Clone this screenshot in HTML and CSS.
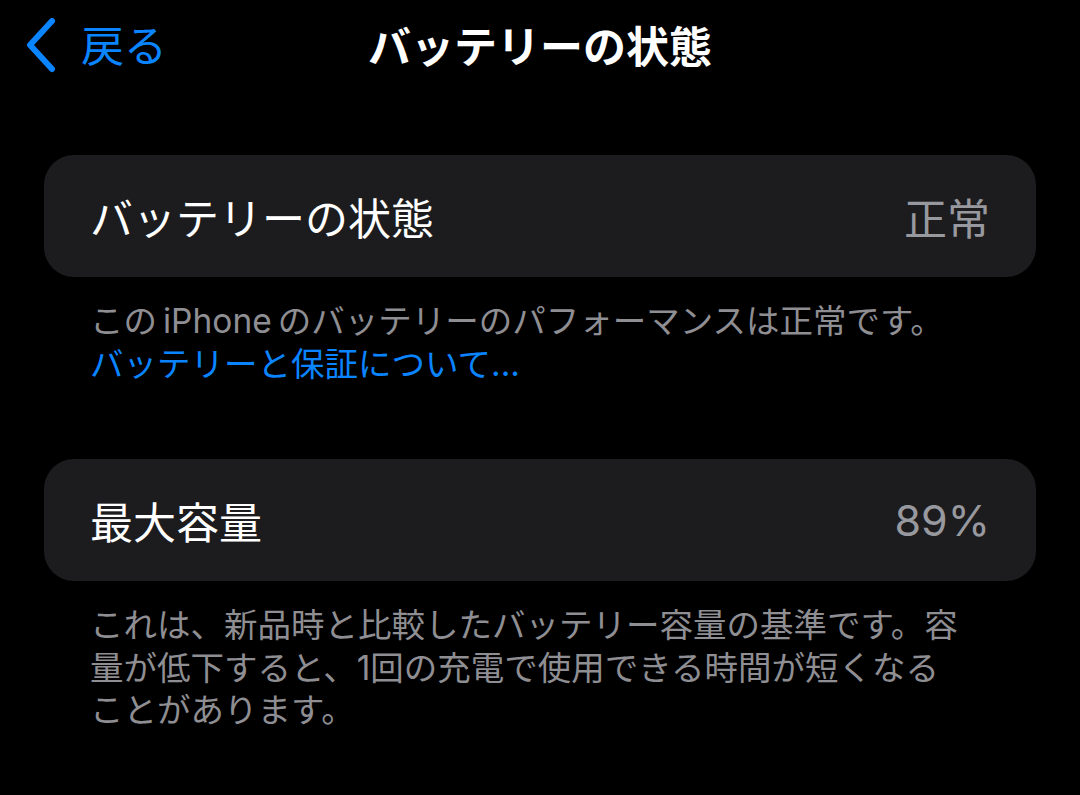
FILE: index.html
```html
<!DOCTYPE html>
<html lang="ja">
<head>
<meta charset="utf-8">
<title>バッテリーの状態</title>
<link rel="stylesheet" href="styles.css">
</head>
<body>
  <header class="navbar">
    <a class="back" href="#">
      <svg class="chev" width="34" height="56" viewBox="0 0 34 56" aria-hidden="true">
        <polyline points="28,3 6,27 28,51" fill="none" stroke="currentColor" stroke-width="6" stroke-linecap="round" stroke-linejoin="round"/>
      </svg>
      <span>戻る</span>
    </a>
    <h1 class="title">バッテリーの状態</h1>
  </header>

  <main class="content">
    <section class="group">
      <div class="cell">
        <span class="cell-label">バッテリーの状態</span>
        <span class="cell-value">正常</span>
      </div>
      <div class="footnote">
        <p>この<span class="latin">iPhone</span>のバッテリーのパフォーマンスは正常です。</p>
        <a class="link" href="#">バッテリーと保証について...</a>
      </div>
    </section>

    <section class="group group-next">
      <div class="cell">
        <span class="cell-label">最大容量</span>
        <span class="cell-value">89%</span>
      </div>
      <div class="footnote">
        <p>これは、新品時と比較したバッテリー容量の基準です。容量が低下すると、1回の充電で使用できる時間が短くなることがあります。</p>
      </div>
    </section>
  </main>
</body>
</html>
```
FILE: styles.css
```css
* {
  box-sizing: border-box;
}

html, body {
  margin: 0;
  padding: 0;
  background: #000;
}

body {
  width: 1080px;
  height: 795px;
  overflow: hidden;
  color: #fff;
  font-family: Inter, "Noto Sans CJK JP", sans-serif;
}

/* navigation bar */
.navbar {
  position: relative;
  height: 94px;
  display: flex;
  align-items: center;
  justify-content: center;
}

.back {
  position: absolute;
  left: 24px;
  top: 18px;
  display: flex;
  align-items: center;
  gap: 23px;
  color: #0a84ff;
  text-decoration: none;
  font-size: 43px;
  line-height: 56px;
}

.chev {
  display: block;
}

.title {
  margin: 0;
  font-size: 43px;
  font-weight: 600;
  line-height: 56px;
  letter-spacing: 0;
}

/* grouped list */
.content {
  padding: 0 44px;
}

.group {
  margin-top: 61px;
}

.group-next {
  margin-top: 74px;
}

.cell {
  height: 122px;
  background: #1c1c1e;
  border-radius: 30px;
  display: flex;
  align-items: center;
  justify-content: space-between;
  padding: 0 46px;
  font-size: 43px;
}

.cell-label {
  color: #fff;
}

.cell-value {
  color: #98989f;
}

.footnote {
  padding: 23px 68px 0 46px;
  font-size: 33.5px;
  line-height: 42.5px;
  color: #8e8e93;
}

.footnote p {
  margin: 0;
}

.latin {
  margin: 0 6px;
}

.link {
  display: block;
  color: #0a84ff;
  text-decoration: none;
}
```
